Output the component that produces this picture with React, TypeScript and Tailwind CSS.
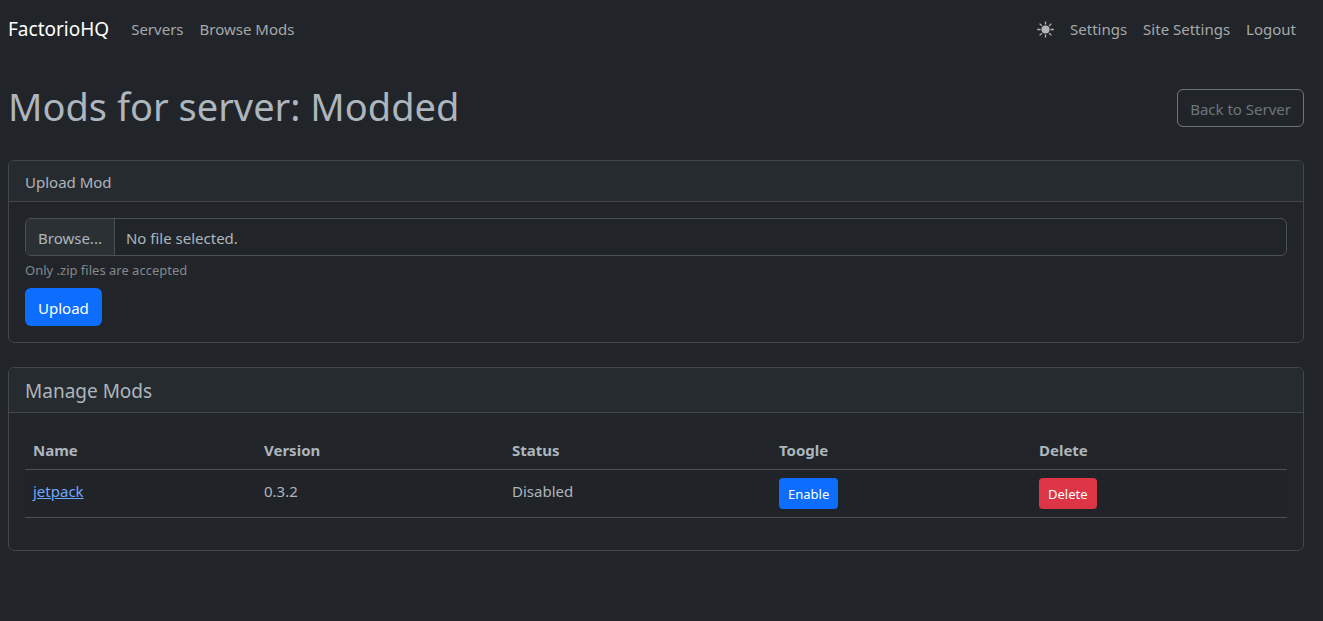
import { useState } from "react";
import type { ReactNode } from "react";

type Mod = { name: string; version: string; enabled: boolean };

const initialMods: Mod[] = [{ name: "jetpack", version: "0.3.2", enabled: false }];

function SunIcon() {
  return (
    <svg viewBox="0 0 18 18" className="size-[18px]" aria-hidden="true">
      <circle cx="9.5" cy="9.5" r="4.1" fill="currentColor" />
      <path
        d="M9.5 1.5v3M9.5 14.5v3M1.2 9.5h3.3M14.5 9.5h3.3M3.6 3.6l2.3 2.3M13.1 13.1l2.3 2.3M3.6 15.4l2.3-2.3M13.1 5.9l2.3-2.3"
        stroke="currentColor"
        strokeWidth="1.3"
        fill="none"
      />
    </svg>
  );
}

function NavLink({ children }: { children: ReactNode }) {
  return (
    <a href="#" className="p-2 text-[#a6a8aa] hover:text-white">
      {children}
    </a>
  );
}

function Navbar() {
  return (
    <nav className="flex items-center justify-between py-[9px]">
      <div className="flex items-center">
        <a href="#" className="mr-[14px] text-[19px] leading-[30px] text-white">
          FactorioHQ
        </a>
        <div className="flex items-center">
          <NavLink>Servers</NavLink>
          <NavLink>Browse Mods</NavLink>
        </div>
      </div>
      <div className="flex items-center">
        <button type="button" aria-label="Toggle theme" className="px-2 text-[#b4b5b6]">
          <SunIcon />
        </button>
        <NavLink>Settings</NavLink>
        <NavLink>Site Settings</NavLink>
        <NavLink>Logout</NavLink>
      </div>
    </nav>
  );
}

function Card({ header, children }: { header: ReactNode; children: ReactNode }) {
  return (
    <section className="overflow-hidden rounded-md border border-[#43474b]">
      <div className="border-b border-[#43474b] bg-[#262b2f] px-4 pt-[9px] pb-[7px]">{header}</div>
      <div className="p-4">{children}</div>
    </section>
  );
}

function UploadForm() {
  const [fileName, setFileName] = useState("");
  return (
    <form onSubmit={(e) => e.preventDefault()}>
      <label
        htmlFor="mod-file"
        className="flex h-[38px] items-stretch overflow-hidden rounded-md border border-[#495057] leading-[36px]"
      >
        <span className="border-r border-[#495057] bg-[#2b3035] px-3 pt-px">Browse...</span>
        <span className="px-[11px] pt-px">{fileName || "No file selected."}</span>
        <input
          id="mod-file"
          type="file"
          accept=".zip"
          className="sr-only"
          onChange={(e) => setFileName(e.target.files?.[0]?.name ?? "")}
        />
      </label>
      <p className="mt-1 text-[13px] leading-[21px] text-[#84888c]">Only .zip files are accepted</p>
      <button
        type="submit"
        className="mt-[7px] block h-[38px] rounded-md bg-[#0d6efd] px-[13px] pt-px text-white"
      >
        Upload
      </button>
    </form>
  );
}

function ModsTable() {
  const [mods, setMods] = useState(initialMods);
  const toggle = (name: string) =>
    setMods(mods.map((m) => (m.name === name ? { ...m, enabled: !m.enabled } : m)));
  const remove = (name: string) => setMods(mods.filter((m) => m.name !== name));
  return (
    <table className="mb-4 w-full table-fixed border-collapse text-left">
      <thead>
        <tr className="h-[40px] border-b border-[#4d5154]">
          <th className="w-[231px] px-2 pt-[2px] font-bold">Name</th>
          <th className="w-[248px] px-2 pt-[2px] font-bold">Version</th>
          <th className="w-[267px] px-2 pt-[2px] font-bold">Status</th>
          <th className="w-[260px] px-2 pt-[2px] font-bold">Toogle</th>
          <th className="w-[256px] px-2 pt-[2px] font-bold">Delete</th>
        </tr>
      </thead>
      <tbody>
        {mods.map((mod) => (
          <tr key={mod.name} className="h-[48px] border-b border-[#4d5154] bg-[#202327] align-top">
            <td className="px-2 pt-[9px]">
              <a href="#" className="text-[#6ea8fe] underline">
                {mod.name}
              </a>
            </td>
            <td className="px-2 pt-[9px]">{mod.version}</td>
            <td className="px-2 pt-[9px]">{mod.enabled ? "Enabled" : "Disabled"}</td>
            <td className="p-2">
              <button
                type="button"
                onClick={() => toggle(mod.name)}
                className="block h-[31px] rounded-sm bg-[#0d6efd] px-[9px] pt-px text-[13px] text-white"
              >
                {mod.enabled ? "Disable" : "Enable"}
              </button>
            </td>
            <td className="p-2">
              <button
                type="button"
                onClick={() => remove(mod.name)}
                className="block h-[31px] rounded-sm bg-[#dc3545] px-[9px] pt-px text-[13px] text-white"
              >
                Delete
              </button>
            </td>
          </tr>
        ))}
      </tbody>
    </table>
  );
}

export default function App() {
  return (
    <div className="min-h-screen bg-[#212529] pr-[19px] pl-2 font-['Noto_Sans','Open_Sans',sans-serif] text-[15px] leading-[24px] text-[#adb5bd]">
      <Navbar />
      <main>
        <div className="flex items-center justify-between pt-6 pb-[26px]">
          <h1 className="pb-1 text-[38px] leading-[48px]">Mods for server: Modded</h1>
          <a
            href="#"
            className="rounded-md border border-[#6c757d] px-3 pt-[7px] pb-[5px] text-[#6c757d]"
          >
            Back to Server
          </a>
        </div>
        <div className="flex flex-col gap-6">
          <Card header="Upload Mod">
            <UploadForm />
          </Card>
          <Card header={<h2 className="text-[19px] leading-[28px]">Manage Mods</h2>}>
            <ModsTable />
          </Card>
        </div>
      </main>
    </div>
  );
}
